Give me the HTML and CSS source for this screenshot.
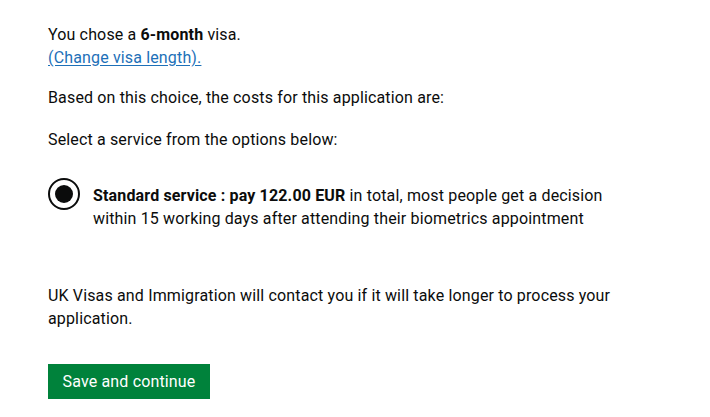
FILE: index.html
```html
<!DOCTYPE html>
<html lang="en">
<head>
<meta charset="utf-8">
<title>Visa service</title>
<link rel="stylesheet" href="styles.css">
</head>
<body>
<main class="page">
  <p class="body intro">You chose a <strong>6-month</strong> visa.<br><a class="link" href="#">(Change visa length).</a></p>
  <p class="body costs">Based on this choice, the costs for this application are:</p>
  <p class="body select">Select a service from the options below:</p>
  <div class="radio">
    <span class="radio-input"><span class="radio-dot"></span></span>
    <label class="radio-label"><strong>Standard service : pay 122.00 EUR</strong> in total, most people get a decision within 15 working days after attending their biometrics appointment</label>
  </div>
  <p class="body contact">UK Visas and Immigration will contact you if it will take longer to process your application.</p>
  <button class="button" type="button">Save and continue</button>
</main>
</body>
</html>
```

FILE: styles.css
```css
html, body {
  margin: 0;
  padding: 0;
  background: #ffffff;
}
body {
  font-family: Roboto, "Liberation Sans", Arial, sans-serif;
  color: #0b0c0c;
  font-size: 16px;
  line-height: 23px;
  letter-spacing: 0.15px;
}
.page {
  padding: 23px 0 0 48px;
  width: 580px;
}
.body {
  margin: 0;
}
.body strong,
.radio-label strong {
  font-weight: 700;
}
.link {
  color: #1d70b8;
  text-decoration: underline;
  text-underline-offset: 2px;
}
.costs {
  margin-top: 17px;
}
.select {
  margin-top: 19px;
}
.radio {
  margin-top: 33px;
  display: flex;
  align-items: flex-start;
  gap: 13px;
}
.radio-input {
  flex: none;
  width: 32px;
  height: 32px;
  box-sizing: border-box;
  border: 2px solid #0b0c0c;
  border-radius: 50%;
  display: flex;
  align-items: center;
  justify-content: center;
  margin-top: -6px;
}
.radio-dot {
  width: 18px;
  height: 18px;
  border-radius: 50%;
  background: #0b0c0c;
}
.radio-label {
  width: 535px;
}
.contact {
  margin-top: 54px;
}
.button {
  margin-top: 34px;
  display: block;
  font-family: inherit;
  font-size: 16px;
  line-height: 19px;
  letter-spacing: 0.15px;
  white-space: nowrap;
  color: #ffffff;
  background: #00823b;
  border: 0;
  border-radius: 0;
  box-shadow: 0 2px 0 #003618;
  padding: 8px 0;
  height: 35px;
  width: 162px;
  text-align: center;
  cursor: pointer;
}
```
